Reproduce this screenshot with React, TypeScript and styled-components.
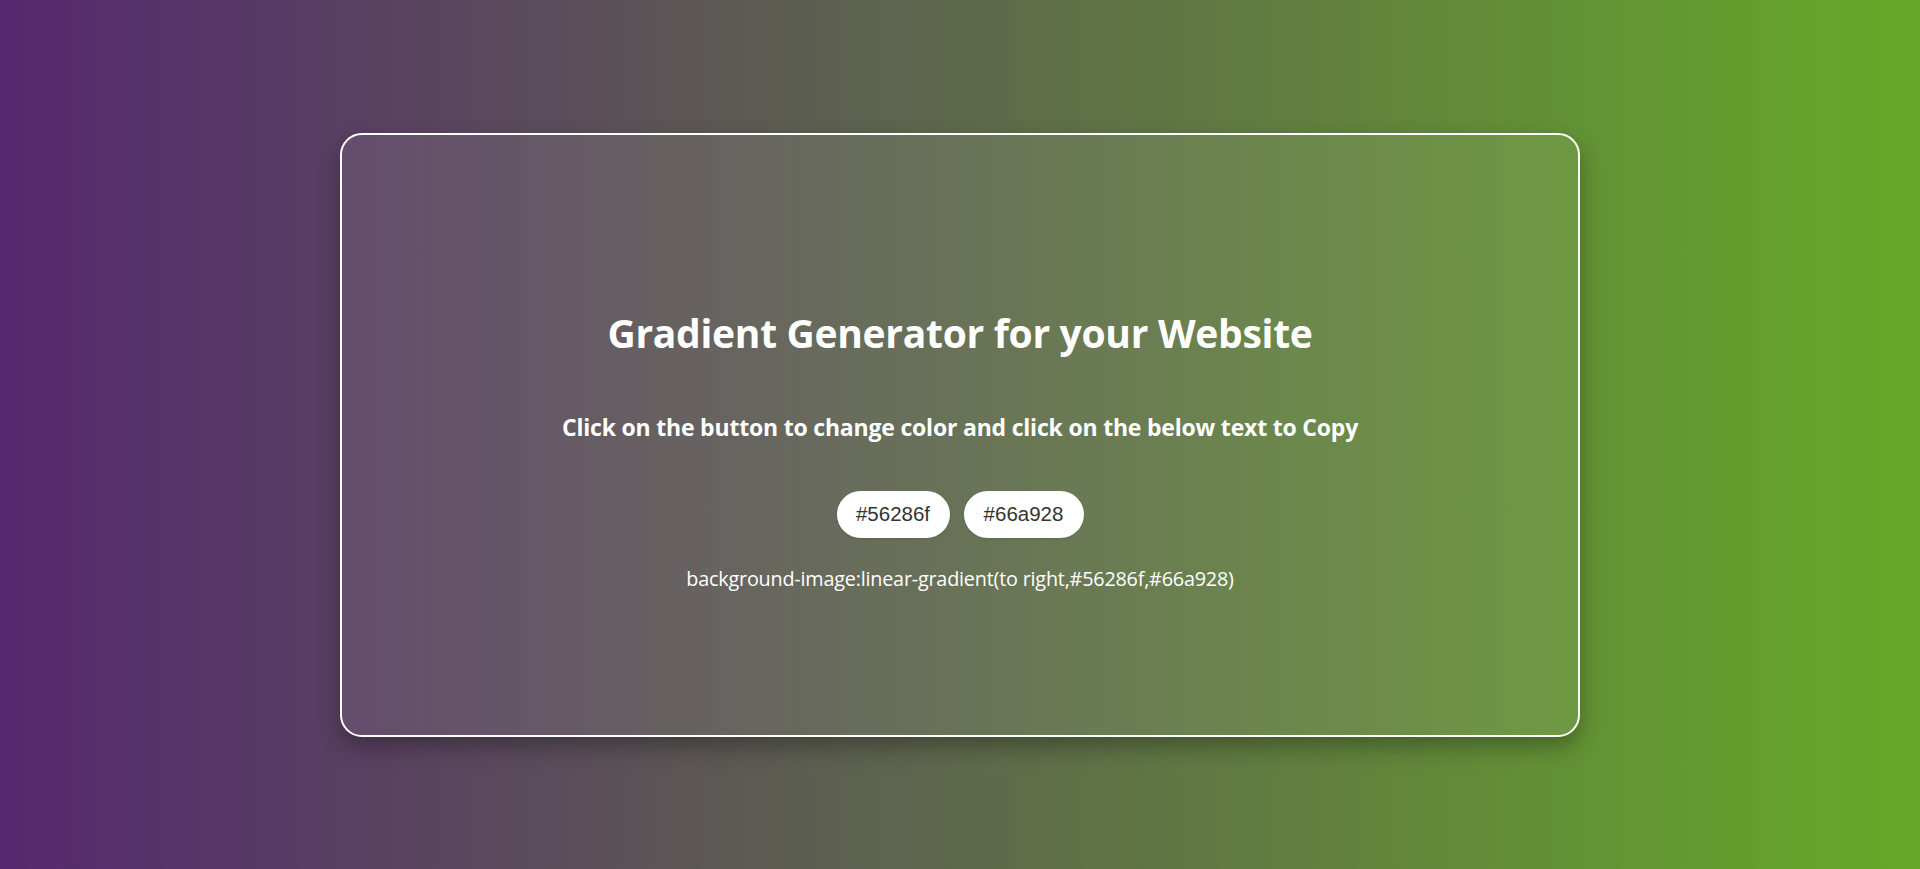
import React from "react";
import styled, { createGlobalStyle } from "styled-components";

const Global = createGlobalStyle`
  html, body { margin: 0; padding: 0; }
  body {
    height: 869px;
    background-image: linear-gradient(to right, #56286f, #66a928);
    font-family: "Open Sans", "Noto Sans", sans-serif;
  }
  #root { height: 100%; }
`;

const Page = styled.main`
  height: 869px;
  display: flex;
  align-items: center;
  justify-content: center;
`;

const Card = styled.section`
  box-sizing: border-box;
  width: 1240px;
  height: 604px;
  border: 2px solid #fff;
  border-radius: 22px;
  background: rgba(255, 255, 255, 0.07);
  box-shadow: 0 10px 22px rgba(0, 0, 0, 0.3);
  display: flex;
  flex-direction: column;
  align-items: center;
  padding-top: 174px;
  color: #fff;
`;

const Title = styled.h1`
  margin: 0;
  font-size: 39px;
  line-height: 48px;
  font-weight: 700;
  letter-spacing: -0.3px;
`;

const Subtitle = styled.h3`
  margin: 55px 0 0;
  font-size: 23px;
  line-height: 30px;
  font-weight: 700;
  letter-spacing: -0.2px;
`;

const Buttons = styled.div`
  margin-top: 49px;
  display: flex;
  gap: 14px;
`;

const ColorButton = styled.button<{ $w: number }>`
  width: ${(p) => p.$w}px;
  height: 47px;
  border: none;
  border-radius: 24px;
  background: #fff;
  color: #333;
  font-family: "Liberation Sans", Arial, sans-serif;
  font-size: 20.5px;
  cursor: pointer;
  box-shadow: 0 1px 3px rgba(0, 0, 0, 0.1);
`;

const CodeText = styled.p`
  margin: 29px 0 0;
  font-size: 19.8px;
  line-height: 24px;
  letter-spacing: -0.2px;
  cursor: pointer;
`;

export default function App() {
  const c1 = "#56286f";
  const c2 = "#66a928";
  return (
    <>
      <Global />
      <Page>
        <Card>
          <Title>Gradient Generator for your Website</Title>
          <Subtitle>
            Click on the button to change color and click on the below text to Copy
          </Subtitle>
          <Buttons>
            <ColorButton $w={113}>{c1}</ColorButton>
            <ColorButton $w={120}>{c2}</ColorButton>
          </Buttons>
          <CodeText>
            background-image:linear-gradient(to right,{c1},{c2})
          </CodeText>
        </Card>
      </Page>
    </>
  );
}
